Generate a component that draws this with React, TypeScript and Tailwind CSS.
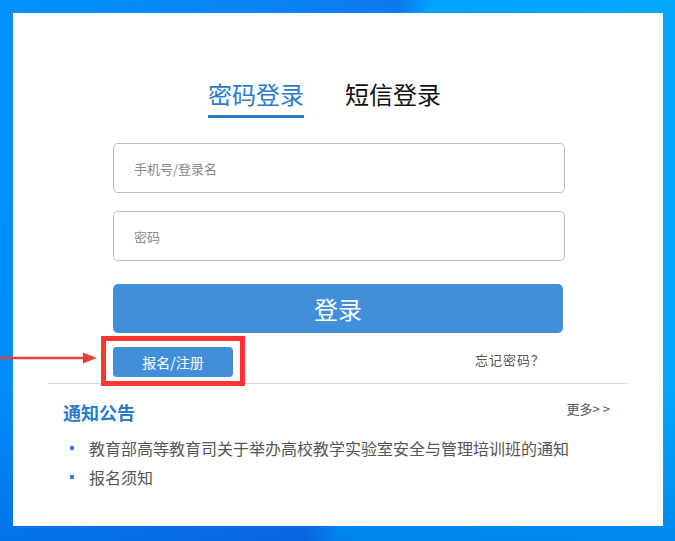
export default function App() {
  const font = { fontFamily: '"Noto Sans CJK SC", "Noto Sans", sans-serif' };
  return (
    <div
      className="relative w-[675px] h-[541px] overflow-hidden pt-[13px] pl-[13px] bg-[linear-gradient(180deg,rgba(0,0,0,0)_70%,rgba(0,40,180,0.25)_100%),linear-gradient(100deg,#0092ff_0%,#0a82f8_35%,#0d78ee_52%,#00a2ff_56%,#00aaff_100%)]"
      style={font}
    >
      <div className="w-[650px] h-[513px] bg-white flex flex-col">
        <div className="ml-[100px] w-[452px] flex flex-col pt-[65px]">
          <div className="flex pl-[95px] gap-[41px]">
            <div className="text-[24px] leading-[32px] pb-[5px] border-b-[3px] border-[#2a7bc9] text-[#2a7bc9]">
              密码登录
            </div>
            <div className="text-[24px] leading-[32px] pb-[5px] border-b-[3px] border-transparent text-[#111]">
              短信登录
            </div>
          </div>
          <input
            className="mt-[25px] h-[50px] w-[452px] rounded-[5px] border border-[#bbbbbb] pl-[20px] text-[13px] outline-none placeholder:text-[#888]"
            placeholder="手机号/登录名"
          />
          <input
            type="password"
            className="mt-[18px] h-[50px] w-[452px] rounded-[5px] border border-[#bbbbbb] pl-[20px] text-[13px] outline-none placeholder:text-[#888]"
            placeholder="密码"
          />
          <button className="mt-[23px] h-[49px] w-[450px] rounded-[5px] bg-[#428fd9] text-white text-[24px] leading-none">
            登录
          </button>
          <div className="mt-[14px] flex items-center justify-between pr-[20px]">
            <button className="h-[30px] w-[120px] rounded-[4px] bg-[#428fd9] text-white text-[14px]">
              报名/注册
            </button>
            <span className="text-[13px] tracking-[1px] text-[#555] mt-[-4px]">忘记密码？</span>
          </div>
        </div>
        <div className="mx-[35px] mt-[6px] border-t border-[#dddddd]" />
        <div className="mx-[35px] px-[15px]">
          <div className="mt-[16px] flex items-start justify-between">
            <div className="text-[18px] leading-[24px] font-bold text-[#2a7bc9]">通知公告</div>
            <div className="text-[13px] leading-[18px] text-[#555]">
              更多<span className="tracking-[3px]">&gt;&gt;</span>
            </div>
          </div>
          <ul className="mt-[9px]">
            {[
              '教育部高等教育司关于举办高校教学实验室安全与管理培训班的通知',
              '报名须知',
            ].map((t) => (
              <li key={t} className="flex items-center h-[29px]">
                <span className="ml-[7px] w-[4px] h-[4px] bg-[#3b7fd6]" />
                <span className="ml-[15px] text-[16px] text-[#555] whitespace-nowrap">{t}</span>
              </li>
            ))}
          </ul>
        </div>
      </div>
      <div className="absolute left-[101px] top-[336px] w-[144px] h-[50px] border-[5px] border-[#ff3434]" />
      <svg className="absolute left-0 top-[350px]" width="100" height="16" viewBox="0 0 100 16">
        <line x1="0" y1="8" x2="86" y2="8" stroke="#e8403a" strokeWidth="2.5" />
        <polygon points="83,2.5 97,8 83,13.5" fill="#e8403a" />
      </svg>
    </div>
  );
}
